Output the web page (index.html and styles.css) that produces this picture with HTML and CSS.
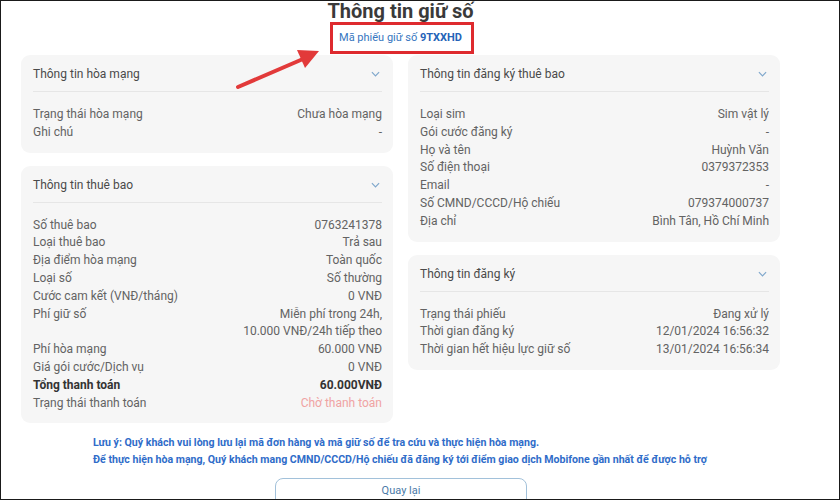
FILE: index.html
```html
<!DOCTYPE html>
<html lang="vi">
<head>
<meta charset="utf-8">
<link rel="stylesheet" href="styles.css">
</head>
<body>
<div class="frame">
  <div class="page">
    <h1 class="title">Thông tin giữ số</h1>
    <div class="code">Mã phiếu giữ số <b>9TXXHD</b></div>

    <div class="columns">
      <div class="col">
        <section class="card">
          <div class="card-head"><span>Thông tin hòa mạng</span><svg class="chev" viewBox="0 0 10 6"><path d="M1 1 L5 5 L9 1"/></svg></div>
          <div class="card-body">
            <div class="row"><span>Trạng thái hòa mạng</span><span>Chưa hòa mạng</span></div>
            <div class="row"><span>Ghi chú</span><span>-</span></div>
          </div>
        </section>
        <section class="card">
          <div class="card-head"><span>Thông tin thuê bao</span><svg class="chev" viewBox="0 0 10 6"><path d="M1 1 L5 5 L9 1"/></svg></div>
          <div class="card-body">
            <div class="row"><span>Số thuê bao</span><span>0763241378</span></div>
            <div class="row"><span>Loại thuê bao</span><span>Trả sau</span></div>
            <div class="row"><span>Địa điểm hòa mạng</span><span>Toàn quốc</span></div>
            <div class="row"><span>Loại số</span><span>Số thường</span></div>
            <div class="row"><span>Cước cam kết (VNĐ/tháng)</span><span>0 VNĐ</span></div>
            <div class="row"><span>Phí giữ số</span><span>Miễn phí trong 24h,<br>10.000 VNĐ/24h tiếp theo</span></div>
            <div class="row"><span>Phí hòa mạng</span><span>60.000 VNĐ</span></div>
            <div class="row"><span>Giá gói cước/Dịch vụ</span><span>0 VNĐ</span></div>
            <div class="row total"><span>Tổng thanh toán</span><span>60.000VNĐ</span></div>
            <div class="row"><span>Trạng thái thanh toán</span><span class="pending">Chờ thanh toán</span></div>
          </div>
        </section>
      </div>
      <div class="col">
        <section class="card">
          <div class="card-head"><span>Thông tin đăng ký thuê bao</span><svg class="chev" viewBox="0 0 10 6"><path d="M1 1 L5 5 L9 1"/></svg></div>
          <div class="card-body">
            <div class="row"><span>Loại sim</span><span>Sim vật lý</span></div>
            <div class="row"><span>Gói cước đăng ký</span><span>-</span></div>
            <div class="row"><span>Họ và tên</span><span>Huỳnh Văn</span></div>
            <div class="row"><span>Số điện thoại</span><span>0379372353</span></div>
            <div class="row"><span>Email</span><span>-</span></div>
            <div class="row"><span>Số CMND/CCCD/Hộ chiếu</span><span>079374000737</span></div>
            <div class="row"><span>Địa chỉ</span><span>Bình Tân, Hồ Chí Minh</span></div>
          </div>
        </section>
        <section class="card">
          <div class="card-head"><span>Thông tin đăng ký</span><svg class="chev" viewBox="0 0 10 6"><path d="M1 1 L5 5 L9 1"/></svg></div>
          <div class="card-body">
            <div class="row"><span>Trạng thái phiếu</span><span>Đang xử lý</span></div>
            <div class="row"><span>Thời gian đăng ký</span><span>12/01/2024 16:56:32</span></div>
            <div class="row"><span>Thời gian hết hiệu lực giữ số</span><span>13/01/2024 16:56:34</span></div>
          </div>
        </section>
      </div>
    </div>

    <div class="notes">
      <p>Lưu ý: Quý khách vui lòng lưu lại mã đơn hàng và mã giữ số để tra cứu và thực hiện hòa mạng.</p>
      <p>Để thực hiện hòa mạng, Quý khách mang CMND/CCCD/Hộ chiếu đã đăng ký tới điểm giao dịch Mobifone gần nhất để được hỗ trợ</p>
    </div>

    <div class="actions"><button class="back">Quay lại</button></div>
  </div>

  <div class="highlight"></div>
  <svg class="arrow" viewBox="0 0 100 50"><line x1="3" y1="46" x2="68" y2="18"/><polygon points="84,10 62,9 70,27"/></svg>
</div>
</body>
</html>
```

FILE: styles.css
```css
* { box-sizing: border-box; }
html, body { margin: 0; padding: 0; background: #fff; }
body { font-family: Roboto, "Noto Sans", sans-serif; color: #555; }

.frame {
  position: relative;
  width: 840px;
  height: 500px;
  border: 1px solid #1a1a1a;
  overflow: hidden;
}

.page { width: 759px; margin-left: 20px; }

.title {
  margin: -2px 0 0;
  text-align: center;
  font-size: 20px;
  line-height: 24px;
  font-weight: 700;
  color: #3a3a3a;
}

.code {
  margin-top: 7px;
  text-align: center;
  font-size: 11px;
  line-height: 16px;
  color: #3576c0;
}
.code b { color: #2563b8; }

.columns {
  margin-top: 9px;
  display: grid;
  grid-template-columns: 372px 372px;
  column-gap: 15px;
  align-items: start;
}
.col { display: flex; flex-direction: column; gap: 13px; }

.card {
  background: #f6f6f6;
  border-radius: 9px;
  padding: 0 11px 0 12px;
}
.card-head {
  display: flex;
  justify-content: space-between;
  align-items: center;
  padding: 10px 0 8px;
  border-bottom: 1px solid #e6e6e6;
  font-size: 12px;
  line-height: 18px;
  color: #4a4a4a;
}
.chev { width: 9px; height: 6px; margin-right: 2px; }
.chev path { fill: none; stroke: #7fa7cc; stroke-width: 1.3; }

.card-body { padding: 14px 0 11px; }
.row {
  display: flex;
  justify-content: space-between;
  font-size: 12px;
  line-height: 17.8px;
  color: #636363;
}
.row span:last-child { text-align: right; }
.row.total { font-weight: 700; color: #333; }
.pending { color: #f0a3a3; }

.notes {
  margin: 11px 0 0 72px;
  font-size: 10.6px;
  line-height: 17px;
  font-weight: 700;
  color: #2f6cc9;
  white-space: nowrap;
}
.notes p { margin: 0; }

.actions { display: flex; justify-content: center; margin-top: 10px; padding-left: 1px; }
.back {
  width: 252px;
  height: 32px;
  background: #fff;
  border: 1px solid #a2c1da;
  border-radius: 8px;
  font-family: inherit;
  font-size: 11px;
  color: #4a7aa8;
  padding: 0 0 8px;
}

.highlight {
  position: absolute;
  left: 329px;
  top: 21px;
  width: 144px;
  height: 32px;
  border: 3px solid #de2a2e;
}
.arrow {
  position: absolute;
  left: 234px;
  top: 40px;
  width: 100px;
  height: 50px;
}
.arrow line { stroke: #e23a3a; stroke-width: 4; stroke-linecap: round; }
.arrow polygon { fill: #e23a3a; }
```
